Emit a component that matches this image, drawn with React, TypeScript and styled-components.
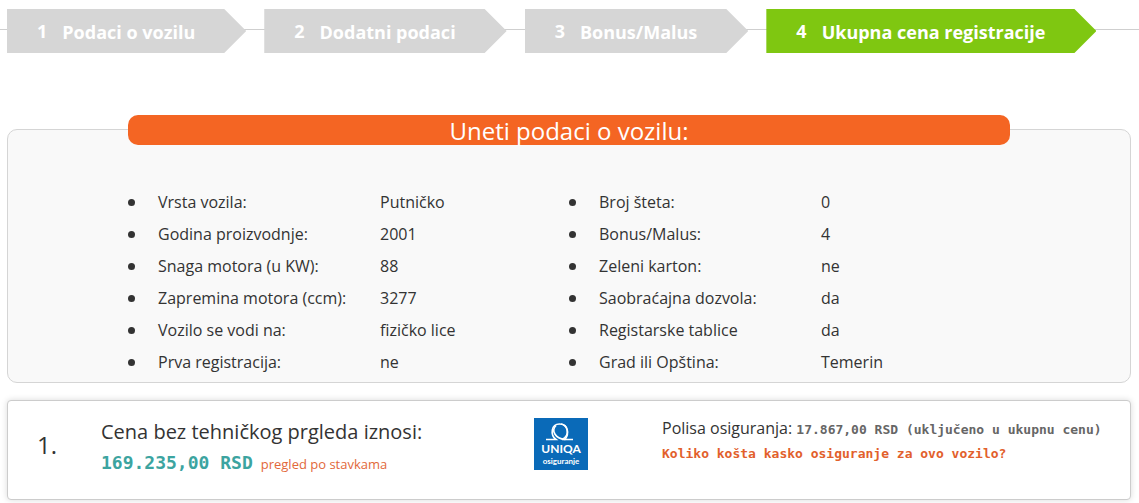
import React from 'react';
import styled, { createGlobalStyle } from 'styled-components';

const GlobalStyle = createGlobalStyle`
  *, *::before, *::after { box-sizing: border-box; }
  body {
    margin: 0;
    background: #fff;
    color: #333;
    font: 16px/32px "Open Sans", "Noto Sans", sans-serif;
  }
`;

const Page = styled.div`
  padding: 9px 0 4px;
  overflow: hidden;
`;

const StepsNav = styled.nav`
  padding: 0 7px;
  background: linear-gradient(#cfcfcf, #cfcfcf) 0 20px / 100% 1px no-repeat;
`;

const StepList = styled.ol`
  display: flex;
  gap: 18px;
  margin: 0;
  padding: 0;
  list-style: none;
`;

const Step = styled.li`
  flex: none;
`;

const StepLink = styled.a<{ $active?: boolean }>`
  display: flex;
  align-items: center;
  gap: 15px;
  height: 44px;
  padding: 0 51px 0 30px;
  background: ${({ $active }) => ($active ? '#7fc711' : '#d6d6d6')};
  clip-path: polygon(0 0, calc(100% - 22px) 0, 100% 50%, calc(100% - 22px) 100%, 0 100%);
  color: #fff;
  font-size: 18px;
  font-weight: 700;
  line-height: 24px;
  text-decoration: none;
`;

const StepNumber = styled.span`
  padding-bottom: 1px;
`;

const StepLabel = styled.span`
  padding-top: 2px;
`;

const Main = styled.main`
  display: flex;
  flex-direction: column;
  gap: 17px;
  padding: 62px 8px 0 7px;
`;

const VehiclePanel = styled.section`
  margin-top: 14px;
  padding: 0 120px 4px;
  border: 1px solid #d5d5d5;
  border-radius: 10px;
  background: #f9f9f9;
`;

const PanelTitle = styled.h2`
  height: 30px;
  margin: -15px 0 41px;
  border-radius: 10px;
  background: #f46523;
  color: #fff;
  font-size: 24px;
  font-weight: 400;
  line-height: 32px;
  text-align: center;
`;

const DetailColumns = styled.div`
  display: grid;
  grid-template-columns: 1fr 1fr;
`;

const DetailList = styled.ul`
  margin: 0;
  padding: 0;
  list-style: none;
`;

const Detail = styled.li`
  display: grid;
  grid-template-columns: 7px 222px 1fr;
  align-items: center;

  &::before {
    content: "";
    width: 7px;
    height: 7px;
    border-radius: 50%;
    background: #333;
  }
`;

const DetailLabel = styled.span`
  padding-left: 23px;
`;

const DetailValue = styled.span`
  padding-left: 23px;
`;

const OfferCard = styled.article`
  display: grid;
  grid-template-columns: 64px 433px 128px 1fr;
  align-items: start;
  min-height: 100px;
  padding: 14px 20px 14px 29px;
  border: 1px solid #ccc;
  border-radius: 4px;
  background: #fff;
  box-shadow: 0 0 6px rgba(0, 0, 0, 0.15);
`;

const OfferIndex = styled.span`
  padding-top: 14px;
  font-size: 24px;
`;

const OfferTitle = styled.h3`
  margin: 0;
  font-size: 20px;
  font-weight: 400;
  line-height: 34px;
`;

const OfferTotal = styled.div`
  line-height: 28px;
`;

const Price = styled.strong`
  color: #3ca4a0;
  font: 700 18px "DejaVu Sans Mono", monospace;
`;

const ItemsLink = styled.a`
  margin-left: 8px;
  color: #e2683a;
  font-size: 13px;
  text-decoration: none;
`;

const InsurerLogo = styled.svg`
  display: block;
  width: 54px;
  height: 52px;
  margin-top: 3px;
`;

const Policy = styled.p`
  margin: 0;
  line-height: 26px;
  white-space: nowrap;
`;

const PolicyPrice = styled.span`
  color: #666;
  font: 700 13px "DejaVu Sans Mono", monospace;
`;

const CascoLink = styled.a`
  display: block;
  color: #e2602c;
  font: 700 13px/26px "DejaVu Sans Mono", monospace;
  text-decoration: none;
`;

const steps = ['Podaci o vozilu', 'Dodatni podaci', 'Bonus/Malus', 'Ukupna cena registracije'];

const details = [
  [
    ['Vrsta vozila:', 'Putničko'],
    ['Godina proizvodnje:', '2001'],
    ['Snaga motora (u KW):', '88'],
    ['Zapremina motora (ccm):', '3277'],
    ['Vozilo se vodi na:', 'fizičko lice'],
    ['Prva registracija:', 'ne'],
  ],
  [
    ['Broj šteta:', '0'],
    ['Bonus/Malus:', '4'],
    ['Zeleni karton:', 'ne'],
    ['Saobraćajna dozvola:', 'da'],
    ['Registarske tablice', 'da'],
    ['Grad ili Opština:', 'Temerin'],
  ],
];

export default function App() {
  return (
    <>
      <GlobalStyle />
      <Page>
        <StepsNav>
          <StepList>
            {steps.map((label, i) => (
              <Step key={label}>
                <StepLink href="#" $active={i === 3} aria-current={i === 3 ? 'step' : undefined}>
                  <StepNumber>{i + 1}</StepNumber>
                  <StepLabel>{label}</StepLabel>
                </StepLink>
              </Step>
            ))}
          </StepList>
        </StepsNav>
        <Main>
          <VehiclePanel>
            <PanelTitle>Uneti podaci o vozilu:</PanelTitle>
            <DetailColumns>
              {details.map((column, i) => (
                <DetailList key={i}>
                  {column.map(([label, value]) => (
                    <Detail key={label}>
                      <DetailLabel>{label}</DetailLabel>
                      <DetailValue>{value}</DetailValue>
                    </Detail>
                  ))}
                </DetailList>
              ))}
            </DetailColumns>
          </VehiclePanel>
          <OfferCard>
            <OfferIndex>1.</OfferIndex>
            <div>
              <OfferTitle>Cena bez tehničkog prgleda iznosi:</OfferTitle>
              <OfferTotal>
                <Price>169.235,00 RSD</Price>
                <ItemsLink href="#">pregled po stavkama</ItemsLink>
              </OfferTotal>
            </div>
            <InsurerLogo viewBox="0 0 54 52" role="img" aria-label="UNIQA osiguranje">
              <rect width="54" height="52" fill="#0a6ab8" />
              <path d="M12 21.500H22C16 17 17 6 25.500 6C35 6 36 18 28 21.500H39" fill="none" stroke="#fff" strokeWidth="1.600" />
              <path d="M22 7.500C17 12.500 21 20.500 31 21.500C36 15 33 7 27 6" fill="none" stroke="#fff" strokeWidth="1.600" />
              <text x="27" y="35" fill="#fff" fontFamily="Lato, sans-serif" fontSize="12" fontWeight="700" textAnchor="middle">UNIQA</text>
              <text x="27" y="46" fill="#fff" fontFamily="Lato, sans-serif" fontSize="8" fontWeight="700" textAnchor="middle">osiguranje</text>
            </InsurerLogo>
            <div>
              <Policy>
                Polisa osiguranja: <PolicyPrice>17.867,00 RSD (uključeno u ukupnu cenu)</PolicyPrice>
              </Policy>
              <CascoLink href="#">Koliko košta kasko osiguranje za ovo vozilo?</CascoLink>
            </div>
          </OfferCard>
        </Main>
      </Page>
    </>
  );
}
